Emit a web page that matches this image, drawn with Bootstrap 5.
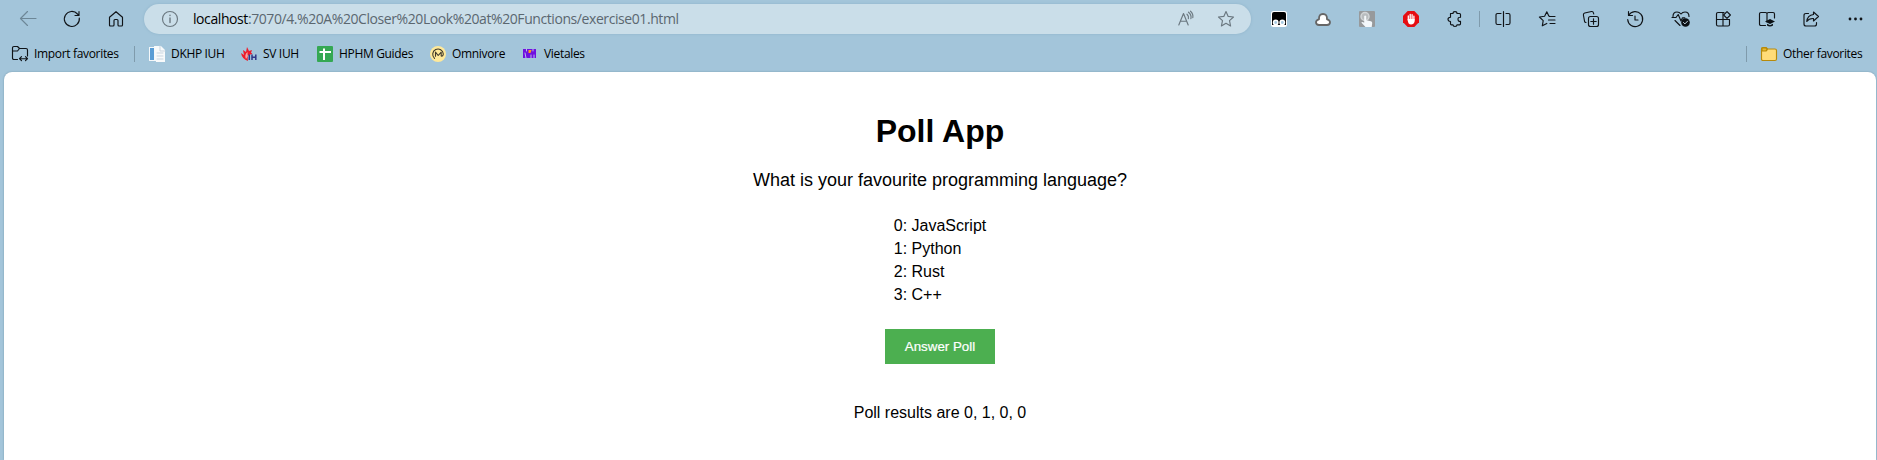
<!DOCTYPE html>
<html lang="en">
<head>
<meta charset="utf-8">
<meta name="viewport" content="width=device-width, initial-scale=1">
<title>Poll App</title>
<link href="https://cdn.jsdelivr.net/npm/bootstrap@5.3.0/dist/css/bootstrap.min.css" rel="stylesheet">
<style>
html,body{height:460px;overflow:hidden}
body{background:#a3c5da;font-family:"Open Sans","Noto Sans",sans-serif;color:#000}
svg{display:block;flex:none;overflow:visible;fill:none;stroke:#101418;stroke-width:1.15;stroke-linecap:round;stroke-linejoin:round}
.toolbar{height:38px;padding-left:6px}
.tool{width:44px;height:38px;flex:none}
.address{height:30px;background:#cadee9;box-shadow:0 0 3px #8fb3c9;margin:0 6px;padding:0 17px 0 18px}
.address svg{stroke:#6b7880}
.url{font-size:14px;color:#5b6770;margin-left:15px;line-height:30px;letter-spacing:-.42px}
.url b{font-weight:400;color:#000}
.favs{height:34px;font-size:12px;line-height:30px;padding:0 16px 3px 12px;letter-spacing:-.33px}
.favs .label{margin-left:6px;padding-top:1px}
.vline{width:1px;height:16px;background:#7f9bac;flex:none}
.page{height:388px;margin:0 1px 0 4px;border-radius:8px 8px 0 0;box-shadow:0 0 2px #6f93a8;font-family:"Liberation Sans",Arial,sans-serif}
.page h1{font-size:32px;line-height:37px;margin:41px 0 0}
.question{font-size:18px;line-height:21px;margin:20px 0 0}
.options{font-size:16px;line-height:23px;margin:23px 0 0}
.answer{background:#4caf50;color:#fff;font-size:13.333px;line-height:15px;padding:10px 0;width:110px;height:35px;border:0;border-radius:0;margin-top:23px;-webkit-text-stroke:.2px #fff}
.result{font-size:16px;line-height:18px;margin:40px 0 0}
</style>
<script src="https://cdn.jsdelivr.net/npm/bootstrap@5.3.0/dist/js/bootstrap.bundle.min.js"></script>
</head>
<body>
<header>
<nav class="toolbar d-flex align-items-center">
  <div class="tool d-flex align-items-center justify-content-center"><svg width="16" height="16" style="stroke:#6d8797"><path d="M16 7.500H.5M7.500.5l-7 7 7 7"/></svg></div>
  <div class="tool d-flex align-items-center justify-content-center"><svg width="16" height="16"><path d="M15.300 7A7.500 7.500 0 1 1 13.500 3L15 4.500M15 .5v4h-4"/></svg></div>
  <div class="tool d-flex align-items-center justify-content-center"><svg width="16" height="16"><path d="M1.500 6.300 8 .7l6.500 5.600V14q0 1-1 1h-2.500q-1 0-1-1V9.500q0-1-1-1H7q-1 0-1 1V14q0 1-1 1H2.500q-1 0-1-1z"/></svg></div>
  <div class="address rounded-pill flex-grow-1 d-flex align-items-center">
    <svg width="16" height="16"><circle cx="8" cy="8" r="7.500"/><path d="M8 7v4.500M8 4.300v.2" stroke-width="1.400"/></svg>
    <span class="url text-nowrap flex-grow-1"><b>localhost</b>:7070/4.%20A%20Closer%20Look%20at%20Functions/exercise01.html</span>
    <svg width="16" height="16" style="margin-right:24px"><path d="m.8 14 4.700-11.500L10.200 14M2.400 10.200h6.200M9 3.200q2 1.800 1.400 4.400M10.500 1.200q3.300 2.600 2.400 6.500M12.500.2q3 2.600 2.300 6.500"/></svg>
    <svg width="16" height="16"><path d="m8 .5 2.200 4.900 5.300.6-4 3.600 1.100 5.400L8 12.300 3.400 15l1.100-5.400-4-3.600 5.300-.6z"/></svg>
  </div>
  <div class="tool d-flex align-items-center justify-content-center"><svg width="16" height="16"><rect width="16" height="16" rx="2.500" style="fill:#fff;stroke:none"/><path d="M1 3q0-2 2-2h10q2 0 2 2v11H1z" style="fill:#000;stroke:none"/><g style="fill:#a8cbe2;stroke:#fff;stroke-width:1.500"><circle cx="4.700" cy="11.500" r="2.200"/><circle cx="11.300" cy="11.500" r="2.200"/></g></svg></div>
  <div class="tool d-flex align-items-center justify-content-center"><svg width="16" height="16"><path d="M4 14q-3 0-3-2.700Q1 9 4 8.300 3.700 3 8 3t4 5.300q3 .7 3 3Q15 14 12 14z" style="fill:#fff;stroke:#666;stroke-width:1.800"/></svg></div>
  <div class="tool d-flex align-items-center justify-content-center"><svg width="16" height="16"><rect width="16" height="16" rx="1" style="fill:#979a9c;stroke:none"/><circle cx="6" cy="5.500" r="4" style="fill:#b8bcbe;stroke:#d2d5d7;stroke-width:1.500"/><path d="M5.200 5q1-1 2 0v4.300l4.700 1q1.600.4 1.300 2L12.700 16H6.500L2.300 11.500q.8-1.300 2.900.2z" style="fill:#f4f8fb;stroke:none"/></svg></div>
  <div class="tool d-flex align-items-center justify-content-center"><svg width="16" height="16"><path d="M4.700 0h6.600L16 4.700v6.600L11.300 16H4.700L0 11.300V4.700z" style="fill:#e60d12;stroke:none"/><path d="M5.300 9V5M7.200 8V3.300M9.100 8V3.600M10.900 9V5.200" style="stroke:#fff;stroke-width:1.300"/><path d="M4.700 8h6.900v2.500Q11 13.500 8 13.500T4.700 9z" style="fill:#fff;stroke:none"/></svg></div>
  <div class="tool d-flex align-items-center justify-content-center"><svg width="16" height="16"><path d="M3.500 2.500H6Q6 .6 8 .6t2 1.900h2.500q1 0 1 1V6.300Q11 6 11 8.300t2.500 2v2.500q0 1-1 1H10q0 1.700-2 1.700t-2-1.700H4.500q-1 0-1-1V10.500Q1 10.300 1 8.300t2.500-2.100z"/></svg></div>
  <div class="d-flex justify-content-center flex-shrink-0" style="width:4px"><span class="vline"></span></div>
  <div class="tool d-flex align-items-center justify-content-center"><svg width="16" height="16"><path d="M6 2.500H2.500q-1.500 0-1.500 1.500v8q0 1.500 1.500 1.500H6M11 2.500h2.500q1.500 0 1.500 1.500v8q0 1.500-1.500 1.500H11M8.500.5v15"/></svg></div>
  <div class="tool d-flex align-items-center justify-content-center"><svg width="16" height="16"><path d="M11 5.500 9.800 5 7.800.8 5.600 5.200.4 6l3.800 3.600-.9 5.200 4.500-2.400M10.500 5.500H16M9.500 9H16M11 12.500h5"/></svg></div>
  <div class="tool d-flex align-items-center justify-content-center"><svg width="16" height="16"><path d="M3 11.500Q2 11.700 1.600 10.500L.4 4Q.2 2.500 1.700 2L8.500.5q1.600-.3 2 1.500l.2 1"/><rect x="5.500" y="5.500" width="10" height="10" rx="2"/><path d="M10.500 7.800v5.400M7.800 10.500h5.400"/></svg></div>
  <div class="tool d-flex align-items-center justify-content-center"><svg width="16" height="16"><path d="M1.500.5v4h4M1.700 4.300A7.500 7.500 0 1 1 .7 8.500M8 5v4h3"/></svg></div>
  <div class="tool d-flex align-items-center justify-content-center ps-1"><svg width="18" height="16"><path d="M1 5.500Q1 1 5 1q2.500 0 4 2 1.500-2 4-2 4 0 4 4.500M0 6.500h4l2.200-3L9 10l1.500-3.200h2.300M3 9.500l5 5"/><circle cx="13.500" cy="11.500" r="4.300" style="fill:#0b1014;stroke:none"/><path d="m11.500 11.500 1.400 1.400 2.700-2.800" style="stroke:#cadee9;stroke-width:1"/></svg></div>
  <div class="tool d-flex align-items-center justify-content-center"><svg width="16" height="16"><path d="M9 1.500H3Q1.500 1.500 1.500 3v10.500Q1.500 15 3 15h10q1.500 0 1.500-1.500V8.500M8 1.500V15M1.500 8.500h13"/><path d="m12 .6 3.400 3.400L12 7.400 8.600 4z" style="fill:#a3c5da"/></svg></div>
  <div class="tool d-flex align-items-center justify-content-center"><svg width="16" height="16"><path d="M6.500 14.500H2q-1.500 0-1.500-1.500V3Q.5 1.500 2 1.500h4.500Q8 1.500 8 3v8M8 3q0-1.500 1.500-1.500H14q1.500 0 1.500 1.500v4"/><path d="M6 10.500 11 8l5 2.500-5 2.500zM8 12.800v1.800q3 2 6 0v-1.800l-3 1.400z" style="fill:#0b1014;stroke:none"/></svg></div>
  <div class="tool d-flex align-items-center justify-content-center"><svg width="16" height="16"><path d="M5.500 2.500H3Q1 2.500 1 4.500V13q0 2 2 2h8.500q2 0 2-2v-1.500M10.500 1 15.500 5.500l-5 4.500V7.500Q6 7.200 3.800 10.500q.5-6.300 6.700-7z"/></svg></div>
  <div class="tool d-flex align-items-center justify-content-center"><svg width="16" height="16"><g style="fill:#101418;stroke:none"><circle cx="3" cy="8" r="1.400"/><circle cx="8.500" cy="8" r="1.400"/><circle cx="14" cy="8" r="1.400"/></g></svg></div>
</nav>
<div class="favs d-flex align-items-center text-nowrap">
  <svg width="16" height="16"><path d="M5.500 13.500H2q-1.500 0-1.500-1.500V2Q.5.500 2 .5h3.500L7.500 2.500H14q1.500 0 1.500 1.500v6M.5 5h5l2-2.500M7.500 12.700h8M9.500 10.700l-2 2 2 2M13.500 10.700l2 2-2 2"/></svg>
  <span class="label" style="width:100px">Import favorites</span>
  <span class="vline" style="margin-right:14px"></span>
  <svg width="16" height="16" style="stroke:none"><path d="M0 1h9v14H0z" fill="#f5f8fa"/><path d="M1 2h4v12H1z" fill="#5a9dd5"/><path d="M5 0h7l4 4v12H7z" fill="#f8fafb"/><path d="M11 0v5h5M8 7h6M8 10h6M8 13h6" style="stroke:#c9d5df;stroke-width:1"/></svg>
  <span class="label" style="width:70px">DKHP IUH</span>
  <svg width="16" height="16" style="stroke:none"><path d="M6 1 8 5l3-1-1 3q2 0 1 1L8 9q-2 1-1 6Q1 13 0 7l3 2-1-5 3 2z" fill="#ed1c2b"/><path d="M5 13Q3 9 6.500 6q0 3 .5 4" fill="#f8a2a1"/><path d="M8.300 8.500v5.500M11 8.500v5.500M14.800 8.500v5.500M11 11.300h4" style="stroke:#2f3689;stroke-width:1.500;stroke-linecap:butt"/></svg>
  <span class="label" style="width:54px">SV IUH</span>
  <svg width="16" height="16"><rect width="16" height="16" rx="1" style="fill:#34a853;stroke:none"/><path d="M2.500 6H14M7 2.500V14" style="stroke:#fff;stroke-width:2;stroke-linecap:butt"/></svg>
  <span class="label" style="width:91px">HPHM Guides</span>
  <svg width="16" height="16"><circle cx="8" cy="8" r="8" style="fill:#ffe99a;stroke:none"/><path d="M4.500 12.300A5.300 5.300 0 1 1 13.300 8Q13 10.500 11.200 10V6.200L8.200 9.500 5.500 6.200v4" style="stroke:#40392a;stroke-width:1.100"/></svg>
  <span class="label" style="width:70px">Omnivore</span>
  <svg width="13" height="9" style="stroke:none;margin-left:1px"><path d="M0 0h13v9H0z" fill="#7010df"/><path d="M2 4l1 5M3.500 0v2M10 0v2M8 6v3M11 6v3" style="stroke:#b8bce9;stroke-width:1"/><path d="M5.500 1h3l-1 3h-2z" fill="#ff9d18"/></svg>
  <span class="label ms-2">Vietales</span>
  <span class="vline ms-auto" style="margin-right:14px"></span>
  <svg width="16" height="16" style="stroke:#b78a0b"><path d="M.5 3Q.5 1.500 2 1.500h3L6.500 3H14q1.500 0 1.500 1.500V13q0 1.500-1.500 1.500H2Q.5 14.500.5 13z" fill="#ffdc78"/><path d="M1 2h4l1.300 1.500L5 5H1z" fill="#e8b92d"/></svg>
  <span class="label" style="width:78px">Other favorites</span>
</div>
</header>
<main class="page bg-white d-flex flex-column align-items-center">
  <h1 class="fw-bold">Poll App</h1>
  <p class="question">What is your favourite programming language?</p>
  <ul class="options list-unstyled"><li>0: JavaScript</li><li>1: Python</li><li>2: Rust</li><li>3: C++</li></ul>
  <button class="answer btn" type="button">Answer Poll</button>
  <p class="result">Poll results are 0, 1, 0, 0</p>
</main>
</body>
</html>
